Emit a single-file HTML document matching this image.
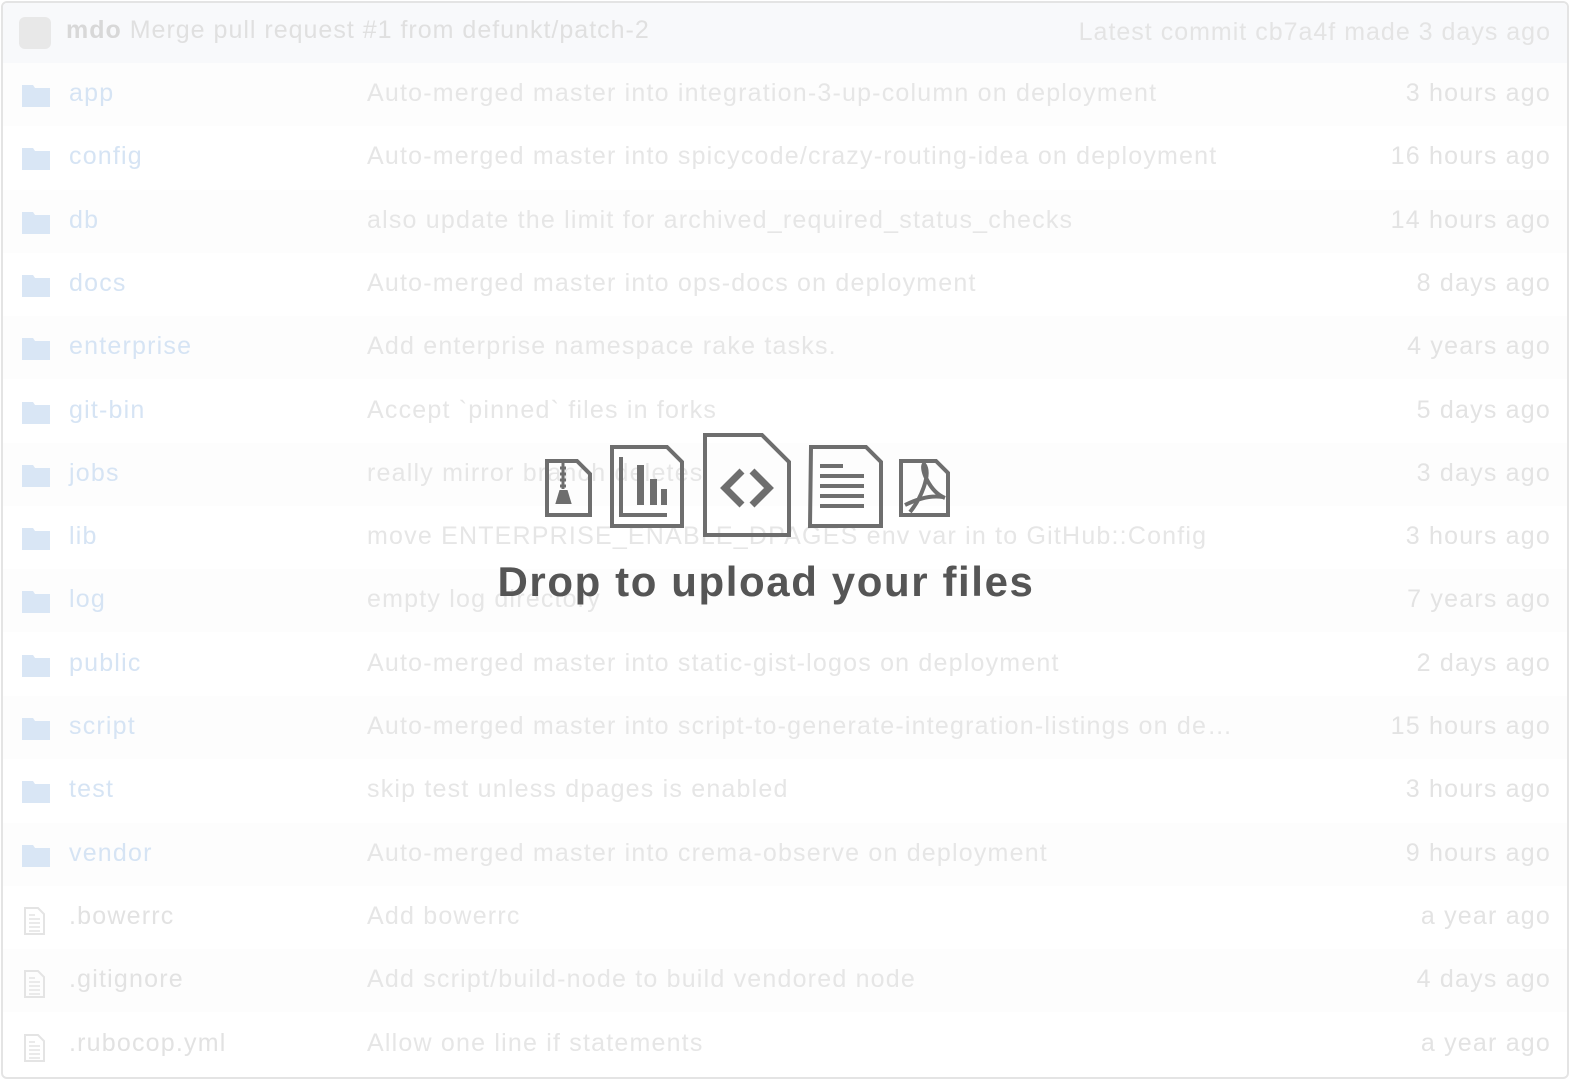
<!DOCTYPE html>
<html><head><meta charset="utf-8"><style>
body{margin:0;width:1580px;height:1086px;background:#fff;font-family:"Liberation Sans",sans-serif;overflow:hidden;position:relative}
.box{position:absolute;left:1px;top:1px;width:1564px;height:1074px;border:2px solid #e4e4e4;border-radius:6px;overflow:hidden}
.hdr{position:absolute;left:0;top:0;right:0;height:60px;background:#f8f9fb;border-bottom:1px solid #f3f4f6}
.av{position:absolute;left:16px;top:14px;width:32px;height:32px;background:#e8e8e8;border-radius:6px}
.hdr .t{position:absolute;left:63px;top:13px;font-size:25px;color:#e0e0e0;letter-spacing:1px}
.hdr .r{position:absolute;right:16px;top:15px;font-size:25px;color:#e4e4e4;letter-spacing:1px}
.row{position:absolute;left:0;right:0;height:63px;font-size:25px}
.row span{position:absolute;top:16px;letter-spacing:1.2px}
.n{left:66px;color:#d6e4f4}.n.f{color:#e2e2e2}
.m{left:364px;color:#e6e6e6}
.a{right:16px;color:#e3e3e3}
.ic{position:absolute;left:18px;top:20px}
.drop{position:absolute;left:0;width:1532px;top:558px;text-align:center;font-weight:bold;font-size:42px;color:#555;letter-spacing:1.6px}
</style></head><body>
<div class="box">
<div class="hdr"><div class="av"></div><div class="t"><b style="color:#d8d8d8">mdo</b> Merge pull request #1 from defunkt/patch-2</div><div class="r">Latest commit cb7a4f made 3 days ago</div></div>
<div id="rows"></div>
</div>
<svg style="position:absolute;left:0;top:0" width="1580" height="1086" fill="none" stroke="#6e6e6e" stroke-width="4">
<path d="M547 461h30l13 13v41h-43z"/><path d="M563 463v26M560 468h6M560 474h6M560 480h6M560 486h6" stroke-width="3"/><path d="M558 502l3-10h5l3 10z" fill="#6e6e6e"/>
<path d="M612 447h55l15 15v64h-70z"/><path d="M621 457v58h46" stroke-width="4"/><rect x="637" y="465" width="7" height="40" fill="#6e6e6e" stroke="none"/><rect x="650" y="479" width="7" height="26" fill="#6e6e6e" stroke="none"/><rect x="661" y="489" width="6" height="16" fill="#6e6e6e" stroke="none"/>
<path d="M705 435h57l27 27v73h-84z"/><path d="M742 471l-17 17 17 17M752 471l17 17-17 17" stroke-width="7"/>
<path d="M811 447h55l15 15v64h-71z"/><path d="M820 466h23M820 486h44M820 496h44M820 506h44M820 476h44" stroke-width="4"/>
<path d="M901 461h35l12 12v42h-47z"/><path d="M910 512c10-12 22-38 14-48-4 5 6 28 21 34M905 505c12-6 26-10 38-8" stroke-width="4"/>
</svg>
<div class="drop">Drop to upload your files</div>
<script>
var d=[["app","Auto-merged master into integration-3-up-column on deployment","3 hours ago"],["config","Auto-merged master into spicycode/crazy-routing-idea on deployment","16 hours ago"],["db","also update the limit for archived_required_status_checks","14 hours ago"],["docs","Auto-merged master into ops-docs on deployment","8 days ago"],["enterprise","Add enterprise namespace rake tasks.","4 years ago"],["git-bin","Accept `pinned` files in forks","5 days ago"],["jobs","really mirror branch deletes","3 days ago"],["lib","move ENTERPRISE_ENABLE_DPAGES env var in to GitHub::Config","3 hours ago"],["log","empty log directory","7 years ago"],["public","Auto-merged master into static-gist-logos on deployment","2 days ago"],["script","Auto-merged master into script-to-generate-integration-listings on de…","15 hours ago"],["test","skip test unless dpages is enabled","3 hours ago"],["vendor","Auto-merged master into crema-observe on deployment","9 hours ago"],[".bowerrc","Add bowerrc","a year ago",1],[".gitignore","Add script/build-node to build vendored node","4 days ago",1],[".rubocop.yml","Allow one line if statements","a year ago",1]];
var h="";d.forEach(function(r,i){var y=60+i*63.3;var ic=r[3]?'<svg class="ic" width="26" height="30"><path d="M4 2h13l6 6v20H4z" fill="none" stroke="#e4e4e4" stroke-width="2"/><path d="M8 13h11M8 17h11M8 21h11M8 25h11M8 9h6" stroke="#e4e4e4" stroke-width="1.5"/></svg>':'<svg class="ic" width="30" height="26" style="top:19px"><path d="M1 3h11l2 3h15v19H1z" fill="#d9e6f5"/></svg>';
h+='<div class="row" style="top:'+y+'px;background:'+(i%2?'#fff':'#fdfdfd')+'">'+ic+'<span class="n'+(r[3]?' f':'')+'">'+r[0]+'</span><span class="m">'+r[1]+'</span><span class="a">'+r[2]+'</span></div>';});
document.getElementById("rows").innerHTML=h;
</script>
</body></html>
